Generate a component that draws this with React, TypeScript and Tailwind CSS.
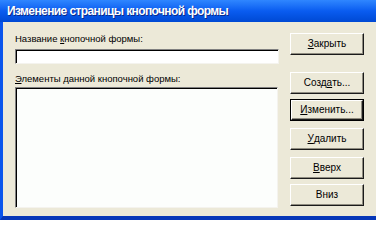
import React from "react";

const ui = { fontFamily: '"Liberation Sans", Arial, sans-serif' };

function Btn({ children, top, isDefault }: { children: React.ReactNode; top: string; isDefault?: boolean }) {
  return (
    <div className={`${top} ${isDefault ? "border border-black" : ""}`}>
      <div
        className={`flex items-center justify-center bg-[#ECE9D8] text-[10px] leading-none text-black border-t border-l border-t-white border-l-white border-r border-b border-r-[#1a1a1a] border-b-[#1a1a1a] shadow-[inset_-1px_-1px_0_#8f8c80] ${
          isDefault ? "w-[72px] h-[20px]" : "w-[74px] h-[22px]"
        }`}
      >
        {children}
      </div>
    </div>
  );
}

export default function App() {
  return (
    <div className="w-[376px] h-[220px] overflow-hidden flex flex-col bg-[#ECE9D8]" style={ui}>
      {/* Title bar */}
      <div className="h-[22px] flex items-center pl-[7px] bg-gradient-to-b from-[#2f86ff] via-[#0a5cf0] to-[#0049d4]">
        <span className="text-[12px] font-bold text-white tracking-[-0.6px] [text-shadow:1px_1px_0_#0a2a8a]">
          Изменение страницы кнопочной формы
        </span>
      </div>

      {/* Body */}
      <div className="flex-1 flex border-l-[3px] border-l-[#0a55ec] border-b-[4px] border-b-[#0637b8]">
        {/* Left column */}
        <div className="flex flex-col pl-[12px] pt-[10px]">
          <div className="text-[9.5px] leading-[12px] text-black h-[17px] pt-[1px]">
            Название <span className="underline">к</span>нопочной формы:
          </div>
          <div className="w-[264px] h-[15px] bg-white border border-t-[#808080] border-l-[#808080] border-r-[#f4f3ee] border-b-[#f4f3ee] shadow-[inset_1px_1px_0_#000]" />
          <div className="mt-[8px] text-[9.5px] leading-[12px] text-black h-[15px] pt-[1px]">
            <span className="underline">Э</span>лементы данной кнопочной формы:
          </div>
          <div className="w-[263px] h-[121px] bg-[#fcfefc] border border-t-[#808080] border-l-[#808080] border-r-[#f4f3ee] border-b-[#f4f3ee] shadow-[inset_1px_1px_0_#000]" />
        </div>

        {/* Right column */}
        <div className="flex flex-col pl-[11px] pt-[11px]">
          <Btn top="">
            <span className="underline">З</span>акрыть
          </Btn>
          <Btn top="mt-[17px]">
            Созд<span className="underline">а</span>ть...
          </Btn>
          <Btn top="mt-[5px]" isDefault>
            <span className="underline">И</span>зменить...
          </Btn>
          <Btn top="mt-[7px]">
            <span className="underline">У</span>далить
          </Btn>
          <Btn top="mt-[7px]">
            <span className="underline">В</span>верх
          </Btn>
          <Btn top="mt-[5px]">Вниз</Btn>
        </div>
      </div>
    </div>
  );
}
